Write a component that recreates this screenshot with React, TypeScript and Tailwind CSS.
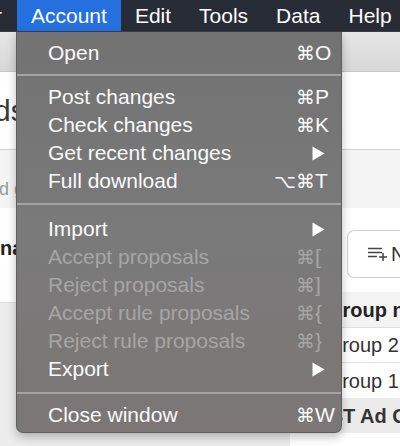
import React from "react";

type Row =
  | { kind: "item"; label: string; mods?: string; k?: string; arrow?: boolean; disabled?: boolean }
  | { kind: "sep"; top: number; bottom: number };

const rows: Row[] = [
  { kind: "item", label: "Open", mods: "⌘", k: "O" },
  { kind: "sep", top: 7, bottom: 7 },
  { kind: "item", label: "Post changes", mods: "⌘", k: "P" },
  { kind: "item", label: "Check changes", mods: "⌘", k: "K" },
  { kind: "item", label: "Get recent changes", arrow: true },
  { kind: "item", label: "Full download", mods: "⌥⌘", k: "T" },
  { kind: "sep", top: 8, bottom: 10 },
  { kind: "item", label: "Import", arrow: true },
  { kind: "item", label: "Accept proposals", mods: "⌘", k: "[", disabled: true },
  { kind: "item", label: "Reject proposals", mods: "⌘", k: "]", disabled: true },
  { kind: "item", label: "Accept rule proposals", mods: "⌘", k: "{", disabled: true },
  { kind: "item", label: "Reject rule proposals", mods: "⌘", k: "}", disabled: true },
  { kind: "item", label: "Export", arrow: true },
  { kind: "sep", top: 9, bottom: 7 },
  { kind: "item", label: "Close window", mods: "⌘", k: "W" },
];

function Arrow() {
  return (
    <svg width="13" height="15" viewBox="0 0 13 15" className="-ml-[3px] shrink-0">
      <path d="M0.5 0.5 L12.5 7.5 L0.5 14.5 Z" fill="#ffffff" />
    </svg>
  );
}

function MenuRow({ r }: { r: Row }) {
  if (r.kind === "sep") {
    return (
      <div style={{ paddingTop: r.top, paddingBottom: r.bottom }}>
        <div className="h-[2px] bg-[#a3a3a3]" />
      </div>
    );
  }
  const color = r.disabled ? "text-[#a6a6a6]" : "text-[#fafafa]";
  return (
    <div className={`flex items-center h-[28px] leading-[28px] pl-[31px] ${color}`}>
      <span className="flex-1 whitespace-nowrap">{r.label}</span>
      <span className="font-['DejaVu_Sans',sans-serif] text-[19px] text-right whitespace-nowrap">
        {r.mods ?? ""}
      </span>
      <span className="w-[26px] shrink-0 flex items-center whitespace-nowrap">
        {r.arrow ? <Arrow /> : <span>{r.k}</span>}
      </span>
    </div>
  );
}

function ListIcon() {
  return (
    <svg width="20" height="14" viewBox="0 0 20 14" className="shrink-0">
      <path d="M0 1.5 H14 M0 5.5 H14 M0 9.5 H9" stroke="#444" strokeWidth="1.5" />
      <path d="M15 6 V14 M11 10 H19" stroke="#444" strokeWidth="1.5" />
    </svg>
  );
}

export default function App() {
  return (
    <div className="relative w-[400px] h-[446px] overflow-hidden bg-white font-['Liberation_Sans',Arial,sans-serif]">
      {/* menu bar */}
      <div className="flex h-[32px] overflow-hidden bg-[#282c37] text-white text-[21px] leading-[32px] border-b border-[#3a3e48]">
        <span className="shrink-0 -ml-[5px] w-[22px]">r</span>
        <span className="shrink-0 px-[14px] bg-[#2570df]">Account</span>
        <span className="shrink-0 px-[14px]">Edit</span>
        <span className="shrink-0 px-[14px]">Tools</span>
        <span className="shrink-0 px-[14px]">Data</span>
        <span className="shrink-0 px-[14px]">Help</span>
      </div>

      {/* page behind the menu */}
      <div className="h-[40px] bg-gradient-to-b from-[#e6e6e6] to-[#d7d7d7] border-b border-[#c6c6c6]" />
      <div className="h-[78px] bg-white border-b border-[#d2d2d2] flex items-center">
        <span className="-ml-[26px] text-[30px] text-[#3a3a3a] whitespace-nowrap">Ads overview</span>
      </div>
      <div className="h-[58px] bg-[#f4f4f4] flex items-end pb-[5px]">
        <span className="-ml-[13px] text-[18px] text-[#9a9a9a] whitespace-nowrap">Ad groups in this campaign</span>
      </div>
      <div className="flex h-[240px]">
        <div className="w-[290px] shrink-0 flex flex-col">
          <div className="h-[94px] bg-white pt-[25px]">
            <span className="font-bold text-[20px] text-[#222] whitespace-nowrap">name</span>
          </div>
          <div className="flex-1 bg-[#ececec] border-t border-[#dcdcdc]" />
        </div>
        <div className="flex-1 min-w-0 overflow-hidden flex flex-col bg-white">
          <div className="pt-[22px] pl-[57px]">
            <div className="h-[48px] border border-[#cfcfcf] rounded-l-[7px] border-r-0 flex items-center pl-[20px] gap-[3px] text-[20px] text-[#333] whitespace-nowrap">
              <ListIcon />
              <span>New</span>
            </div>
          </div>
          <div className="mt-[14px] h-[36px] bg-[#f3f3f3] border-b border-[#dedede] flex items-center pl-[8px] font-bold text-[20px] text-[#222] whitespace-nowrap">
            Ad group name
          </div>
          <div className="h-[35px] border-b border-[#e2e2e2] flex items-center pl-[11px] text-[20px] text-[#333] whitespace-nowrap">
            Ad group 2
          </div>
          <div className="h-[35px] flex items-center pl-[11px] text-[20px] text-[#333] whitespace-nowrap">
            Ad group 1
          </div>
          <div className="h-[35px] bg-[#ebebeb] flex items-center pl-[13px] font-bold text-[20px] text-[#333] whitespace-nowrap">
            LAST Ad Groups
          </div>
        </div>
      </div>

      {/* dropdown menu */}
      <div className="absolute left-[16px] top-[32px] w-[326px] h-[401px] rounded-b-[7px] border border-t-0 border-[#5e5e5e] bg-gradient-to-b from-[#727272] via-[#7a7a7a] to-[#7c7676] shadow-[0_4px_10px_rgba(0,0,0,0.25)] pt-[7px] text-[21px]">
        {rows.map((r, i) => (
          <MenuRow key={i} r={r} />
        ))}
      </div>
    </div>
  );
}
